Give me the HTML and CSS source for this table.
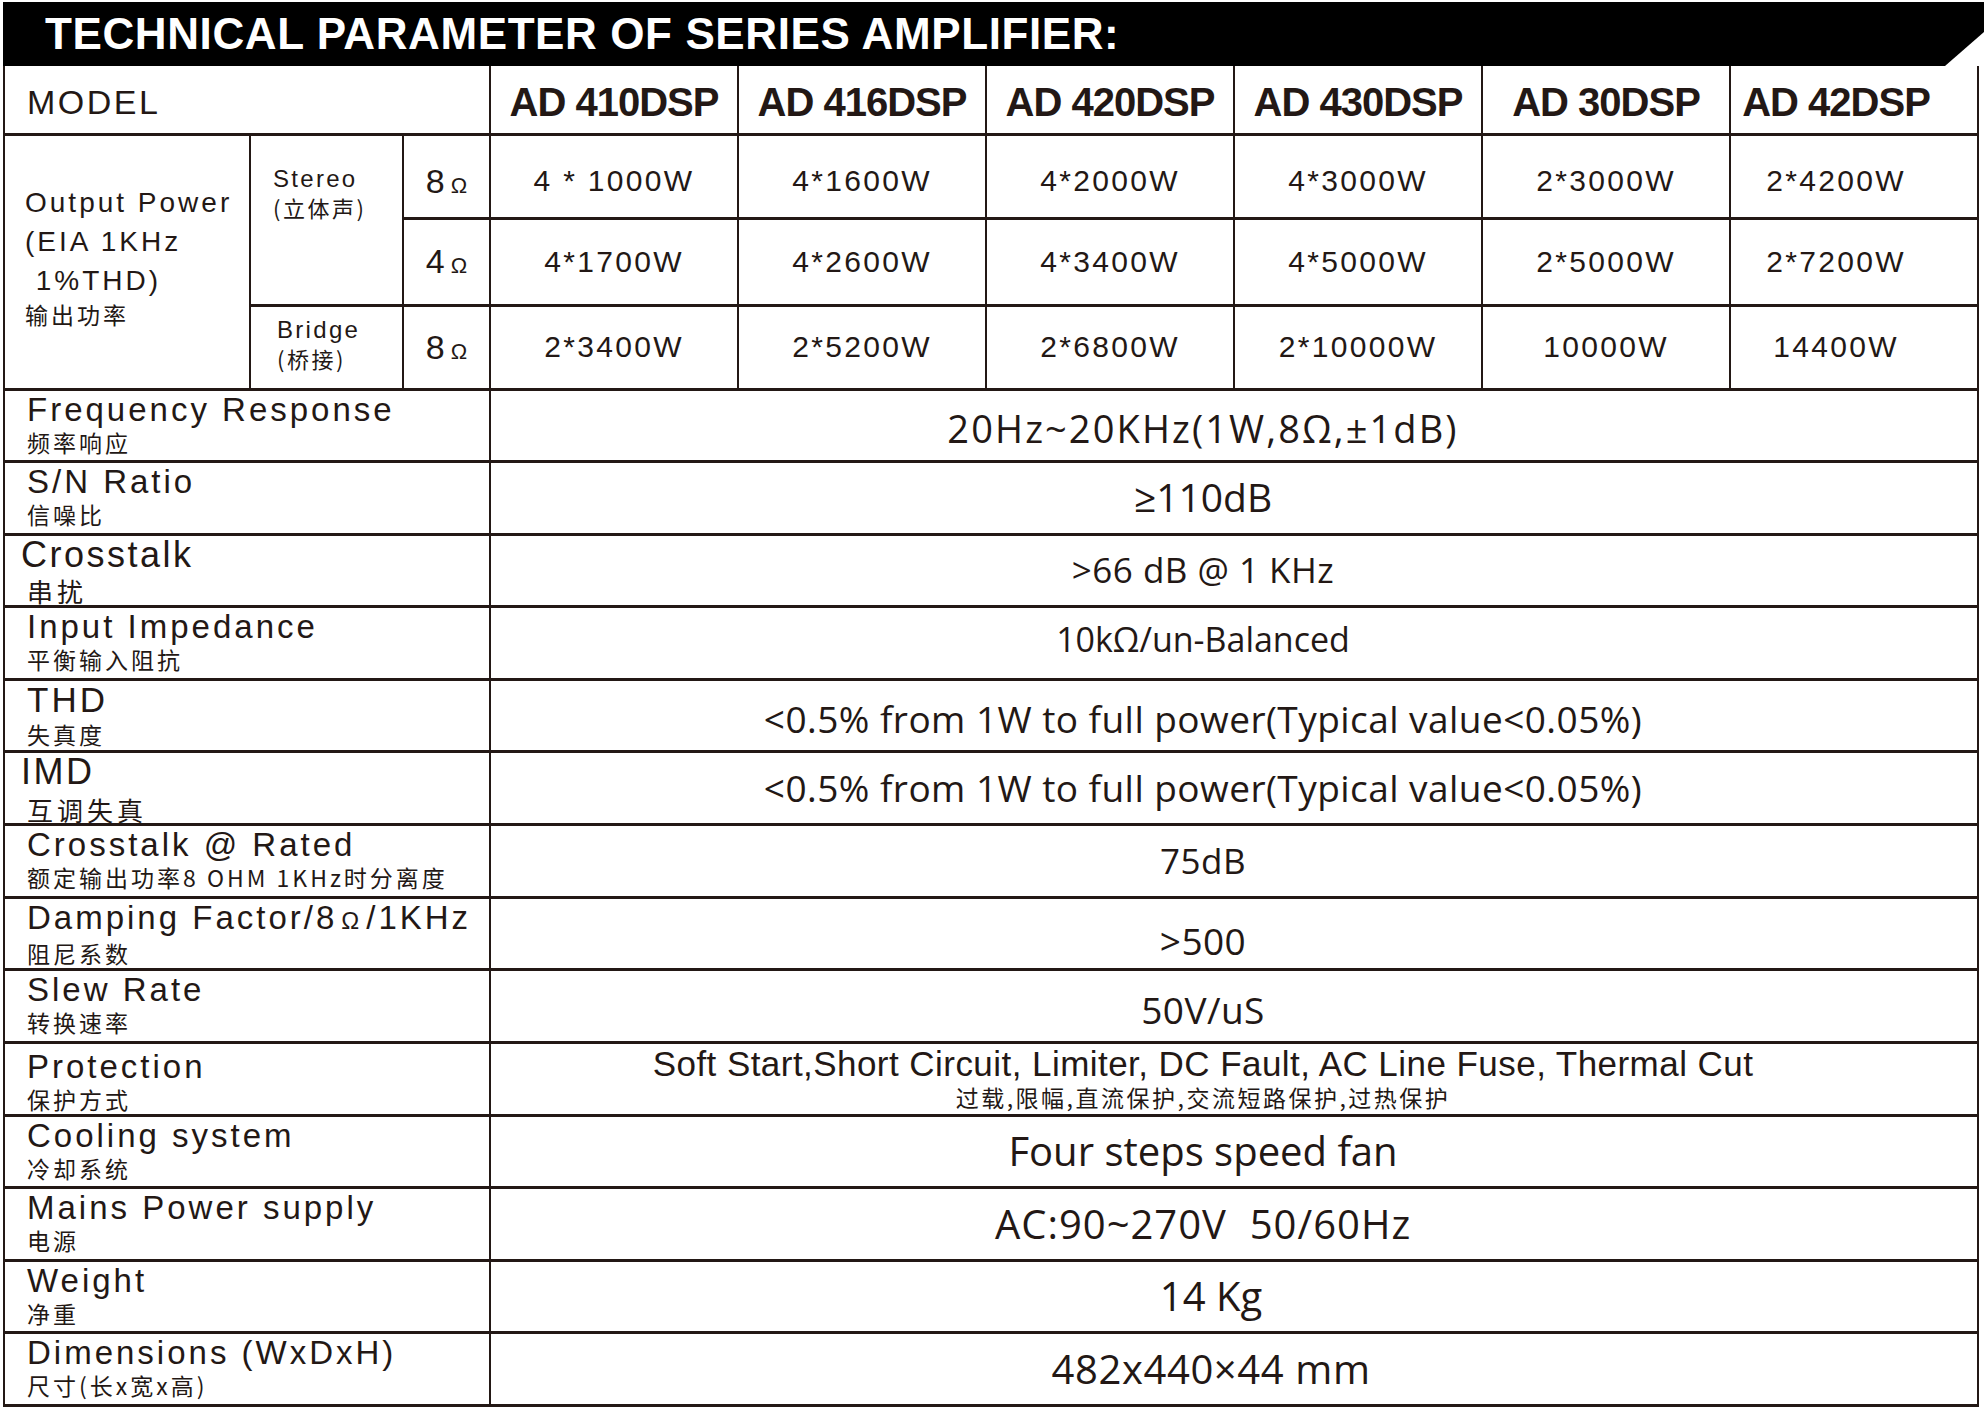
FILE: index.html
```html
<!DOCTYPE html>
<html lang="en">
<head>
<meta charset="utf-8">
<title>Technical Parameter of Series Amplifier</title>
<link rel="stylesheet" href="styles.css">
</head>
<body>
<div class="sheet">
  <header class="titlebar"><h1 class="title">TECHNICAL PARAMETER OF SERIES AMPLIFIER:</h1></header>
  <table class="spec">
    <colgroup>
      <col class="c-label"><col class="c-mode"><col class="c-ohm">
      <col class="c-model"><col class="c-model"><col class="c-model"><col class="c-model"><col class="c-model"><col class="c-model">
    </colgroup>
    <tr class="r-model">
      <th colspan="3" class="model-label">MODEL</th>
      <th class="model">AD 410DSP</th>
      <th class="model">AD 416DSP</th>
      <th class="model">AD 420DSP</th>
      <th class="model">AD 430DSP</th>
      <th class="model">AD 30DSP</th>
      <th class="model last">AD 42DSP</th>
    </tr>
    <tr class="r-op1">
      <td rowspan="3" class="op-label">
        <div class="op-en">Output Power</div>
        <div class="op-en">(EIA 1KHz</div>
        <div class="op-en">&nbsp;1%THD)</div>
        <div class="op-zh">输出功率</div>
      </td>
      <td rowspan="2" class="mode mode-stereo"><div class="mode-en">Stereo</div><div class="mode-zh">(立体声)</div></td>
      <td class="ohm"><span class="ohm-n">8</span><span class="ohm-s">Ω</span></td>
      <td class="pw">4 * 1000W</td>
      <td class="pw">4*1600W</td>
      <td class="pw">4*2000W</td>
      <td class="pw">4*3000W</td>
      <td class="pw">2*3000W</td>
      <td class="pw last">2*4200W</td>
    </tr>
    <tr class="r-op2">
      <td class="ohm"><span class="ohm-n">4</span><span class="ohm-s">Ω</span></td>
      <td class="pw">4*1700W</td>
      <td class="pw">4*2600W</td>
      <td class="pw">4*3400W</td>
      <td class="pw">4*5000W</td>
      <td class="pw">2*5000W</td>
      <td class="pw last">2*7200W</td>
    </tr>
    <tr class="r-op3">
      <td class="mode mode-bridge"><div class="mode-en">Bridge</div><div class="mode-zh">(桥接)</div></td>
      <td class="ohm"><span class="ohm-n">8</span><span class="ohm-s">Ω</span></td>
      <td class="pw">2*3400W</td>
      <td class="pw">2*5200W</td>
      <td class="pw">2*6800W</td>
      <td class="pw">2*10000W</td>
      <td class="pw">10000W</td>
      <td class="pw last">14400W</td>
    </tr>
    <tr class="r-spec">
      <td colspan="3" class="label"><div class="en">Frequency Response</div><div class="zh">频率响应</div></td>
      <td colspan="6" class="val down-4"><span class="v-38">20Hz~20KHz(1W,8Ω,±1dB)</span></td>
    </tr>
    <tr class="r-spec">
      <td colspan="3" class="label"><div class="en">S/N Ratio</div><div class="zh">信噪比</div></td>
      <td colspan="6" class="val"><span class="v-39">≥110dB</span></td>
    </tr>
    <tr class="r-spec">
      <td colspan="3" class="label"><div class="en en-lg">Crosstalk</div><div class="zh zh-lg">串扰</div></td>
      <td colspan="6" class="val"><span class="v-35">&gt;66 dB @ 1 KHz</span></td>
    </tr>
    <tr class="r-spec">
      <td colspan="3" class="label"><div class="en">Input Impedance</div><div class="zh">平衡输入阻抗</div></td>
      <td colspan="6" class="val up-4"><span class="v-34">10kΩ/un-Balanced</span></td>
    </tr>
    <tr class="r-spec">
      <td colspan="3" class="label"><div class="en en-md">THD</div><div class="zh zh-md">失真度</div></td>
      <td colspan="6" class="val down-4"><span class="v-37">&lt;0.5% from 1W to full power(Typical value&lt;0.05%)</span></td>
    </tr>
    <tr class="r-spec">
      <td colspan="3" class="label"><div class="en en-lg">IMD</div><div class="zh zh-lg zh-low">互调失真</div></td>
      <td colspan="6" class="val"><span class="v-37">&lt;0.5% from 1W to full power(Typical value&lt;0.05%)</span></td>
    </tr>
    <tr class="r-spec">
      <td colspan="3" class="label"><div class="en">Crosstalk @ Rated</div><div class="zh">额定输出功率8 OHM 1KHz时分离度</div></td>
      <td colspan="6" class="val"><span class="v-35">75dB</span></td>
    </tr>
    <tr class="r-spec">
      <td colspan="3" class="label"><div class="en">Damping Factor/8<span class="ohm-sm">Ω</span>/1KHz</div><div class="zh">阻尼系数</div></td>
      <td colspan="6" class="val down-8"><span class="v-37">&gt;500</span></td>
    </tr>
    <tr class="r-spec">
      <td colspan="3" class="label"><div class="en">Slew Rate</div><div class="zh">转换速率</div></td>
      <td colspan="6" class="val down-4"><span class="v-37">50V/uS</span></td>
    </tr>
    <tr class="r-spec">
      <td colspan="3" class="label"><div class="en en-low">Protection</div><div class="zh">保护方式</div></td>
      <td colspan="6" class="val">
        <div class="prot-en">Soft Start,Short Circuit, Limiter, DC Fault, AC Line Fuse, Thermal Cut</div>
        <div class="prot-zh">过载,限幅,直流保护,交流短路保护,过热保护</div>
      </td>
    </tr>
    <tr class="r-spec">
      <td colspan="3" class="label"><div class="en">Cooling system</div><div class="zh">冷却系统</div></td>
      <td colspan="6" class="val"><span class="v-40">Four steps speed fan</span></td>
    </tr>
    <tr class="r-spec">
      <td colspan="3" class="label"><div class="en">Mains Power supply</div><div class="zh">电源</div></td>
      <td colspan="6" class="val"><span class="v-40 wide">AC:90~270V&nbsp; 50/60Hz</span></td>
    </tr>
    <tr class="r-spec">
      <td colspan="3" class="label"><div class="en">Weight</div><div class="zh">净重</div></td>
      <td colspan="6" class="val shift-r"><span class="v-40">14 Kg</span></td>
    </tr>
    <tr class="r-spec">
      <td colspan="3" class="label"><div class="en">Dimensions (WxDxH)</div><div class="zh">尺寸(长x宽x高)</div></td>
      <td colspan="6" class="val shift-r"><span class="v-40 wide-sm">482x440×44 mm</span></td>
    </tr>
  </table>
</div>
</body>
</html>
```

FILE: styles.css
```css
* { box-sizing: border-box; }
html, body { margin: 0; padding: 0; background: #fff; }
body {
  width: 1984px;
  height: 1407px;
  overflow: hidden;
  color: #231815;
  font-family: "Liberation Sans", Arial, sans-serif;
}
td, th { padding: 0; }
.sheet { padding-top: 2px; }

/* Title bar */
.titlebar {
  margin-left: 3px;
  height: 64px;
  background: #000;
  display: flex;
  align-items: center;
  padding-left: 42px;
  clip-path: polygon(0 0, 100% 0, 100% 47%, calc(100% - 39px) 100%, 0 100%);
}
.title {
  margin: 0;
  font: bold 44px/1 "Liberation Sans", Arial, sans-serif;
  letter-spacing: 0.6px;
  color: #fff;
}

/* Table */
.spec {
  margin-left: 3px;
  border-collapse: collapse;
  table-layout: fixed;
  width: 1974px;
}
.c-label { width: 246px; }
.c-mode { width: 153px; }
.c-ohm { width: 87px; }
.c-model { width: 248px; }

.spec td, .spec th {
  border-style: solid;
  border-color: #231815;
  border-width: 3px 2px;
}
.r-model th { border-top-width: 0; }

.r-model { height: 68px; }
.r-op1 { height: 84px; }
.r-op2 { height: 87px; }
.r-op3 { height: 84px; }
.r-spec { height: 72.57px; }

/* Model header */
.model-label {
  text-align: left;
  padding: 6px 0 0 22px;
  font-weight: normal;
  font-size: 34px;
  letter-spacing: 2.5px;
}
.model {
  text-align: center;
  padding-top: 6px;
  font-weight: bold;
  font-size: 40px;
  letter-spacing: -1px;
}
.last { padding-right: 36px; }

/* Output power block */
.op-label {
  vertical-align: top;
  padding: 47px 0 0 20px;
}
.op-en {
  font-size: 28px;
  line-height: 39px;
  letter-spacing: 3px;
  white-space: nowrap;
}
.op-zh {
  font: 23px/28px "Noto Sans CJK SC", sans-serif;
  letter-spacing: 3px;
}
.mode { padding-left: 22px; }
.mode-stereo { vertical-align: top; padding-top: 29px; }
.mode-bridge { vertical-align: middle; padding-left: 26px; padding-bottom: 8px; }
.mode-en {
  font-size: 24px;
  line-height: 27px;
  letter-spacing: 2.3px;
}
.mode-zh {
  font: 22px/26px "Noto Sans CJK SC", sans-serif;
  letter-spacing: 2.5px;
  margin-top: 2px;
}
.ohm {
  text-align: center;
  vertical-align: middle;
  white-space: nowrap;
}
.ohm-n { font-size: 34px; }
.ohm-s { font-size: 22px; margin-left: 6px; }
.pw {
  text-align: center;
  vertical-align: middle;
  font-size: 30px;
  letter-spacing: 2.3px;
  white-space: nowrap;
}
.r-op1 .ohm, .r-op1 .pw { padding-top: 10px; }

/* Spec rows */
.label {
  vertical-align: top;
  padding: 0 0 0 22px;
  white-space: nowrap;
}
.en {
  font-size: 33px;
  line-height: 37px;
  letter-spacing: 3px;
}
.en-lg { font-size: 36px; letter-spacing: 2.5px; margin-left: -6px; }
.en-md { font-size: 35px; }
.en-low { padding-top: 4px; }
.ohm-sm { font-size: 24px; margin: 0 4px; }
.zh {
  font: 23px/26px "Noto Sans CJK SC", sans-serif;
  letter-spacing: 3px;
  margin-top: 1px;
}
.zh-md { margin-top: 3px; }
.zh-lg { font-size: 26px; letter-spacing: 4px; margin-top: 5px; }
.zh-low { margin-top: 7px; }

.val {
  text-align: center;
  vertical-align: middle;
  padding: 0 62px 0 0;
  font-family: "Open Sans", "Liberation Sans", sans-serif;
  line-height: 1.2;
  white-space: nowrap;
}
.down-4 { padding-top: 8px; }
.down-8 { padding-top: 16px; }
.up-4 { padding-bottom: 8px; }
.shift-r { padding-left: 16px; }
.v-34 { font-size: 34px; }
.v-35 { font-size: 35px; letter-spacing: 0.5px; }
.v-37 { font-size: 37px; letter-spacing: 0.45px; }
.v-38 { font-size: 38px; letter-spacing: 2.1px; }
.v-39 { font-size: 39px; }
.v-40 { font-size: 40px; }
.wide { letter-spacing: 1px; }
.wide-sm { letter-spacing: 0.6px; }

.prot-en {
  font-family: "Liberation Sans", Arial, sans-serif;
  font-size: 35px;
  letter-spacing: 0.45px;
  line-height: 34px;
}
.prot-zh {
  font: 23px/26px "Noto Sans CJK SC", sans-serif;
  letter-spacing: 2.5px;
  margin-top: 3px;
}
```
